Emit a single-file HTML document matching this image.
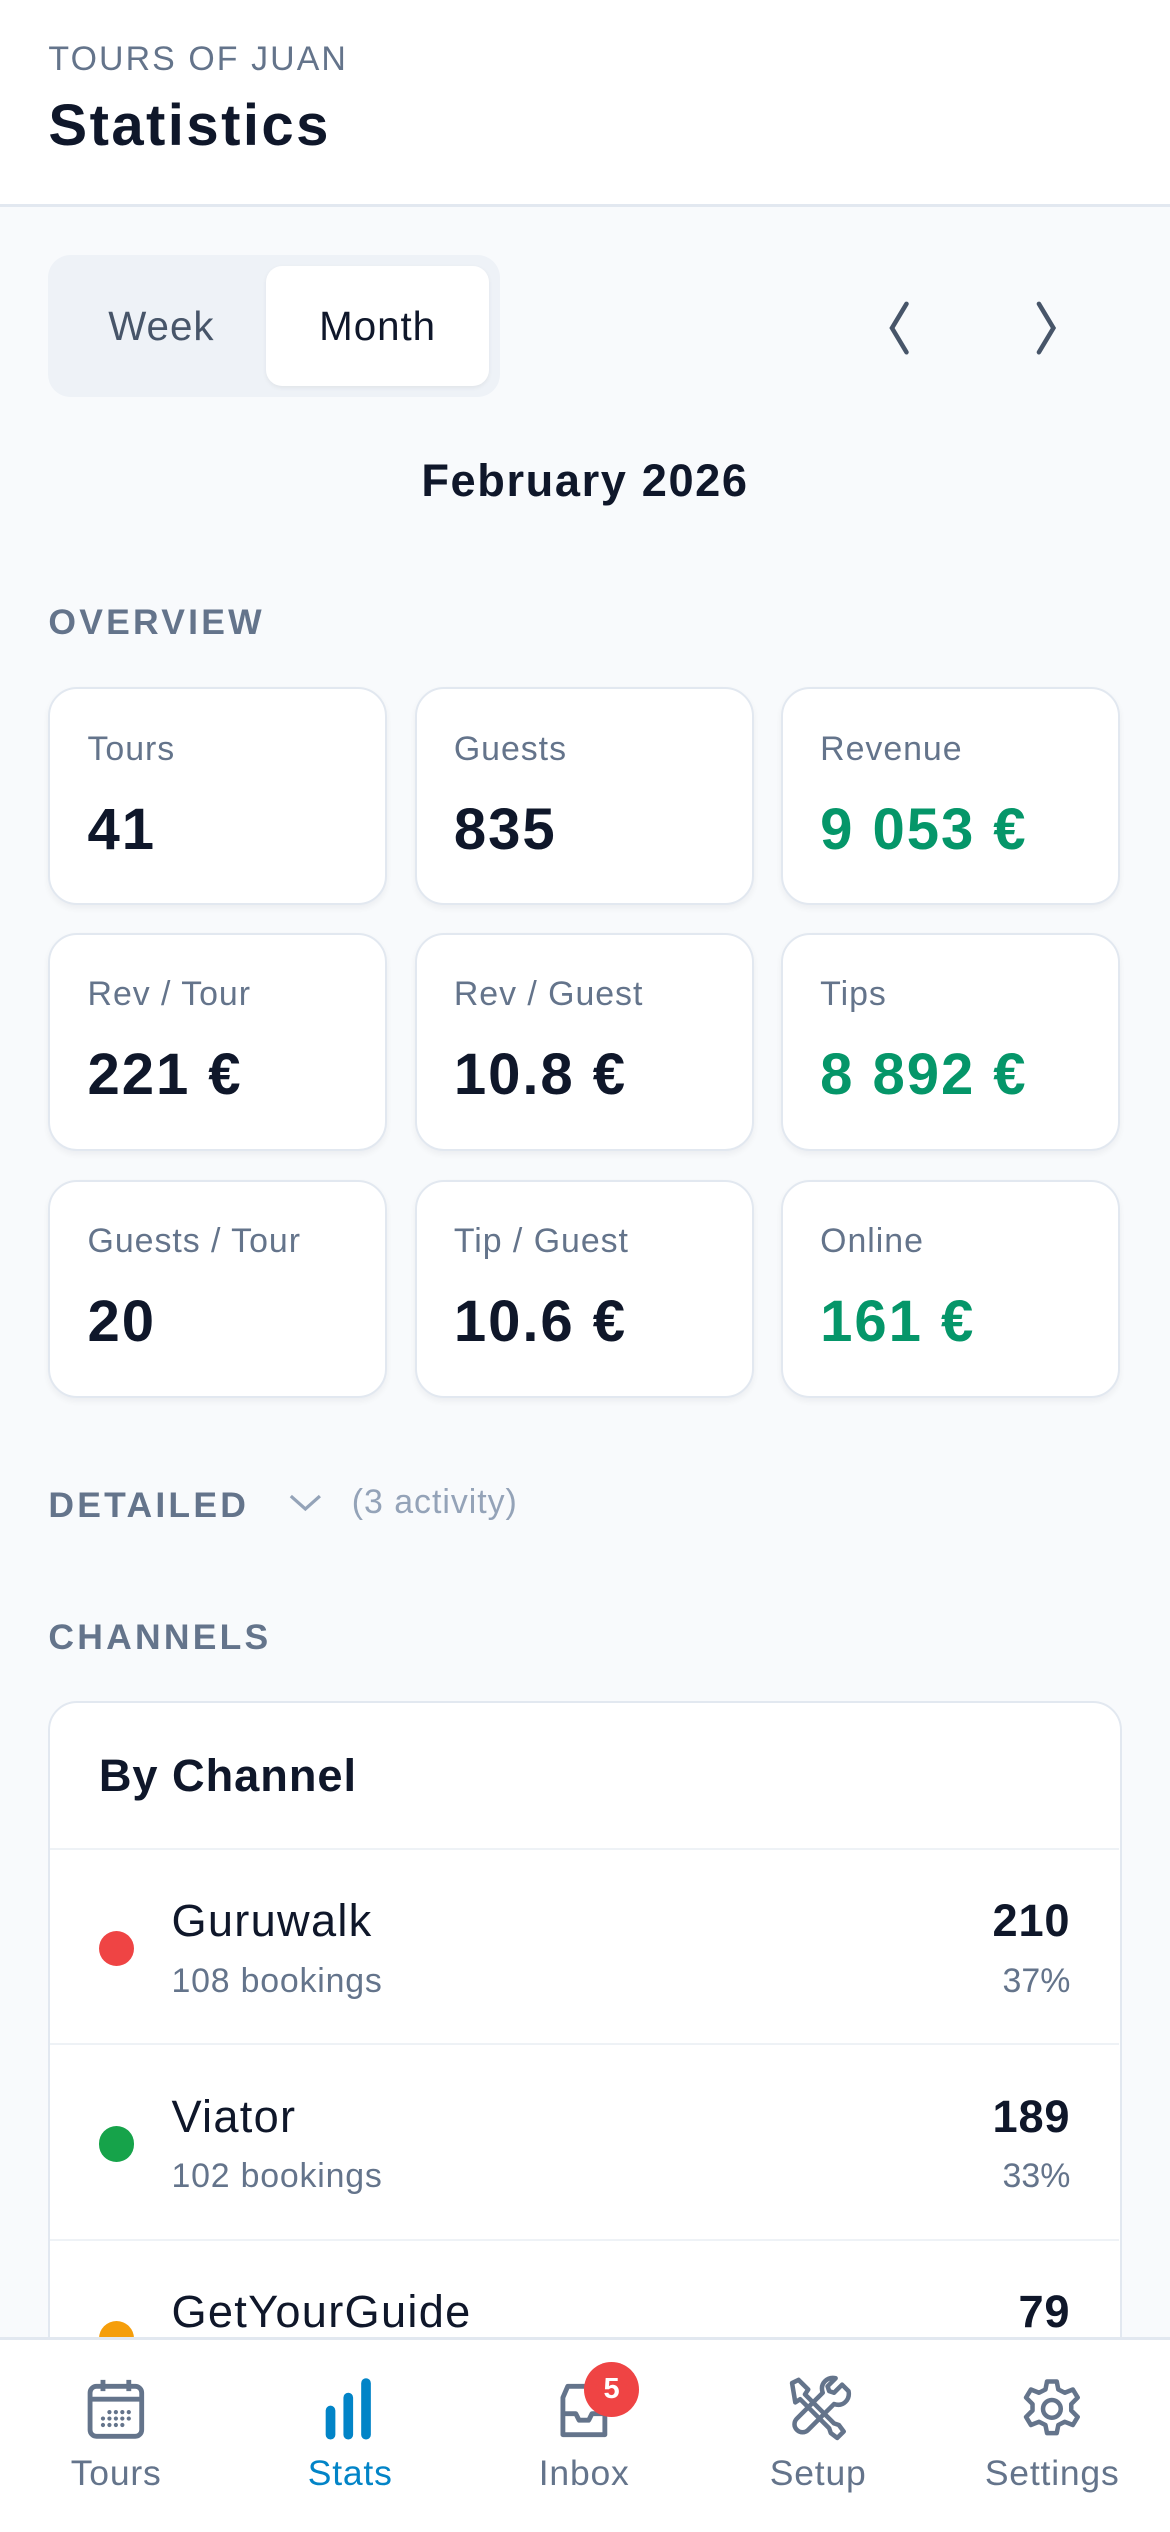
<!DOCTYPE html>
<html><head><meta charset="utf-8"><style>
*{box-sizing:border-box;margin:0;padding:0}
html,body{width:1170px;height:2532px;overflow:hidden;background:#f8fafc}
#r{zoom:1.61379;width:725px;height:1569px;position:relative;font-family:"Liberation Sans",sans-serif;color:#0f172a;overflow:hidden}
.a{position:absolute}
.hdr{left:0;top:0;width:725px;height:128px;background:#fff;border-bottom:2px solid #e2e8f0}
.sec{font-size:22px;letter-spacing:2px;color:#64748b;font-weight:bold}
.card{position:absolute;width:210px;height:135px;background:#fff;border:1.5px solid #e2e8f0;border-radius:18px;box-shadow:0 2px 4px rgba(15,23,42,.05)}
.card .l{position:absolute;left:23px;top:25px;font-size:21px;letter-spacing:.6px;color:#64748b}
.card .v{position:absolute;left:23px;top:66px;font-size:36px;letter-spacing:1.2px;font-weight:bold}
.g{color:#059669}
.row{position:absolute;left:0;width:662px;height:121px;border-top:1.5px solid #eef2f6}
.row .dot{position:absolute;left:30px;top:50px;width:22px;height:22px;border-radius:50%}
.row .n{position:absolute;left:75px;top:28px;font-size:28px;letter-spacing:.8px}
.row .s{position:absolute;left:75px;top:69px;font-size:21px;letter-spacing:.5px;color:#64748b}
.row .c{position:absolute;right:30px;top:28px;font-size:28px;letter-spacing:.5px;font-weight:bold}
.row .p{position:absolute;right:30px;top:69px;font-size:21px;color:#64748b}
.nav{left:0;top:1448px;width:725px;height:121px;background:#fff;border-top:2px solid #e2e8f0}
.ni{position:absolute;top:22px;width:120px;text-align:center;color:#64748b;font-size:22px;letter-spacing:.5px}
.ni svg{display:block;margin:0 auto 6px}
</style></head><body><div id="r">
<div class="a hdr">
<div class="a" style="left:30px;top:25px;font-size:21px;letter-spacing:1.3px;color:#64748b">TOURS OF JUAN</div>
<div class="a" style="left:30px;top:57px;font-size:36px;letter-spacing:1.5px;font-weight:bold">Statistics</div>
</div>
<div class="a" style="left:30px;top:158px;width:280px;height:88px;background:#eef2f7;border-radius:14px"></div>
<div class="a" style="left:165px;top:165px;width:138px;height:74px;background:#fff;border-radius:10px;box-shadow:0 1px 3px rgba(0,0,0,.06)"></div>
<div class="a" style="left:30px;top:188px;width:140px;text-align:center;font-size:25px;letter-spacing:.6px;color:#475569">Week</div>
<div class="a" style="left:165px;top:188px;width:138px;text-align:center;font-size:25px;letter-spacing:.6px">Month</div>
<svg class="a" style="left:540px;top:185px" width="30" height="36"><path d="M22 3L13 18l9 15" fill="none" stroke="#475569" stroke-width="2.8" stroke-linecap="round"/></svg>
<svg class="a" style="left:636px;top:185px" width="30" height="36"><path d="M8 3l9 15-9 15" fill="none" stroke="#475569" stroke-width="2.8" stroke-linecap="round"/></svg>
<div class="a" style="left:0;top:282px;width:725px;text-align:center;font-size:28px;letter-spacing:1px;font-weight:bold">February 2026</div>
<div class="a sec" style="left:30px;top:373px">OVERVIEW</div>
<div class="card" style="left:30px;top:426px"><div class="l">Tours</div><div class="v">41</div></div>
<div class="card" style="left:257px;top:426px"><div class="l">Guests</div><div class="v">835</div></div>
<div class="card" style="left:484px;top:426px"><div class="l">Revenue</div><div class="v g">9 053 €</div></div>
<div class="card" style="left:30px;top:578px"><div class="l">Rev / Tour</div><div class="v">221 €</div></div>
<div class="card" style="left:257px;top:578px"><div class="l">Rev / Guest</div><div class="v">10.8 €</div></div>
<div class="card" style="left:484px;top:578px"><div class="l">Tips</div><div class="v g">8 892 €</div></div>
<div class="card" style="left:30px;top:731px"><div class="l">Guests / Tour</div><div class="v">20</div></div>
<div class="card" style="left:257px;top:731px"><div class="l">Tip / Guest</div><div class="v">10.6 €</div></div>
<div class="card" style="left:484px;top:731px"><div class="l">Online</div><div class="v g">161 €</div></div>
<div class="a sec" style="left:30px;top:920px">DETAILED</div>
<svg class="a" style="left:177px;top:922px" width="24" height="18"><path d="M3 5l9 8 9-8" fill="none" stroke="#94a3b8" stroke-width="2"/></svg>
<div class="a" style="left:218px;top:919px;font-size:21px;letter-spacing:.6px;color:#94a3b8">(3 activity)</div>
<div class="a sec" style="left:30px;top:1002px">CHANNELS</div>
<div class="a" style="left:30px;top:1054px;width:665px;height:500px;background:#fff;border:1.5px solid #e2e8f0;border-radius:18px;overflow:hidden">
<div class="a" style="left:30px;top:29px;font-size:28px;letter-spacing:.6px;font-weight:bold">By Channel</div>
<div class="row" style="top:90px"><div class="dot" style="background:#ef4444"></div><div class="n">Guruwalk</div><div class="s">108 bookings</div><div class="c">210</div><div class="p">37%</div></div>
<div class="row" style="top:211px"><div class="dot" style="background:#16a34a"></div><div class="n">Viator</div><div class="s">102 bookings</div><div class="c">189</div><div class="p">33%</div></div>
<div class="row" style="top:332px"><div class="dot" style="background:#f59e0b"></div><div class="n">GetYourGuide</div><div class="s">45 bookings</div><div class="c">79</div><div class="p">14%</div></div>
</div>
<div class="a nav">
<div class="ni" style="left:12px"><svg width="42" height="42" viewBox="0 0 42 42"><rect x="5" y="7" width="32" height="31" rx="4" fill="none" stroke="#64748b" stroke-width="3"/><path d="M5 15h32M13 3v7M29 3v7" stroke="#64748b" stroke-width="3"/><g fill="#64748b"><circle cx="17" cy="23" r="1.3"/><circle cx="21" cy="23" r="1.3"/><circle cx="25" cy="23" r="1.3"/><circle cx="29" cy="23" r="1.3"/><circle cx="13" cy="27" r="1.3"/><circle cx="17" cy="27" r="1.3"/><circle cx="21" cy="27" r="1.3"/><circle cx="25" cy="27" r="1.3"/><circle cx="29" cy="27" r="1.3"/><circle cx="13" cy="31" r="1.3"/><circle cx="17" cy="31" r="1.3"/><circle cx="21" cy="31" r="1.3"/><circle cx="25" cy="31" r="1.3"/></g></svg>Tours</div>
<div class="ni" style="left:157px;color:#0284c7"><svg width="42" height="42" viewBox="0 0 42 42"><path d="M9 22v15M20 14v23M31 5v32" stroke="#0284c7" stroke-width="6" stroke-linecap="round"/></svg>Stats</div>
<div class="ni" style="left:302px"><svg width="42" height="42" viewBox="0 0 42 42"><path d="M8 14l3-7h20l3 7v23H8zM8 24h8l2 4h6l2-4h8" fill="none" stroke="#64748b" stroke-width="3" stroke-linejoin="round"/></svg>Inbox
<div class="a" style="left:60px;top:-8px;width:34px;height:34px;border-radius:50%;background:#ef4444;color:#fff;font-weight:bold;font-size:18px;line-height:34px;letter-spacing:0">5</div></div>
<div class="ni" style="left:447px"><svg width="42" height="42" viewBox="0 0 42 42"><path d="M5 5l4-2 6 6-2 3 18 18 3 1 3 4-4 4-4-3-1-3-18-18-3 2z" fill="none" stroke="#64748b" stroke-width="2.8" stroke-linejoin="round"/><path d="M36 6l-5 5-3-1-1-3 5-5c-5-1-10 3-8 9L8 27c-2 2-2 5 0 7s5 2 7 0L31 18c6 2 10-3 9-8z" fill="none" stroke="#64748b" stroke-width="2.8" stroke-linejoin="round"/></svg>Setup</div>
<div class="ni" style="left:592px"><svg width="42" height="42" viewBox="0 0 42 42"><path d="M18 4h6l1 5 4 2 5-2 3 5-4 4v4l4 4-3 5-5-2-4 2-1 5h-6l-1-5-4-2-5 2-3-5 4-4v-4l-4-4 3-5 5 2 4-2z" fill="none" stroke="#64748b" stroke-width="2.8" stroke-linejoin="round"/><circle cx="21" cy="21" r="5.5" fill="none" stroke="#64748b" stroke-width="2.8"/></svg>Settings</div>
</div>
</div></body></html>
